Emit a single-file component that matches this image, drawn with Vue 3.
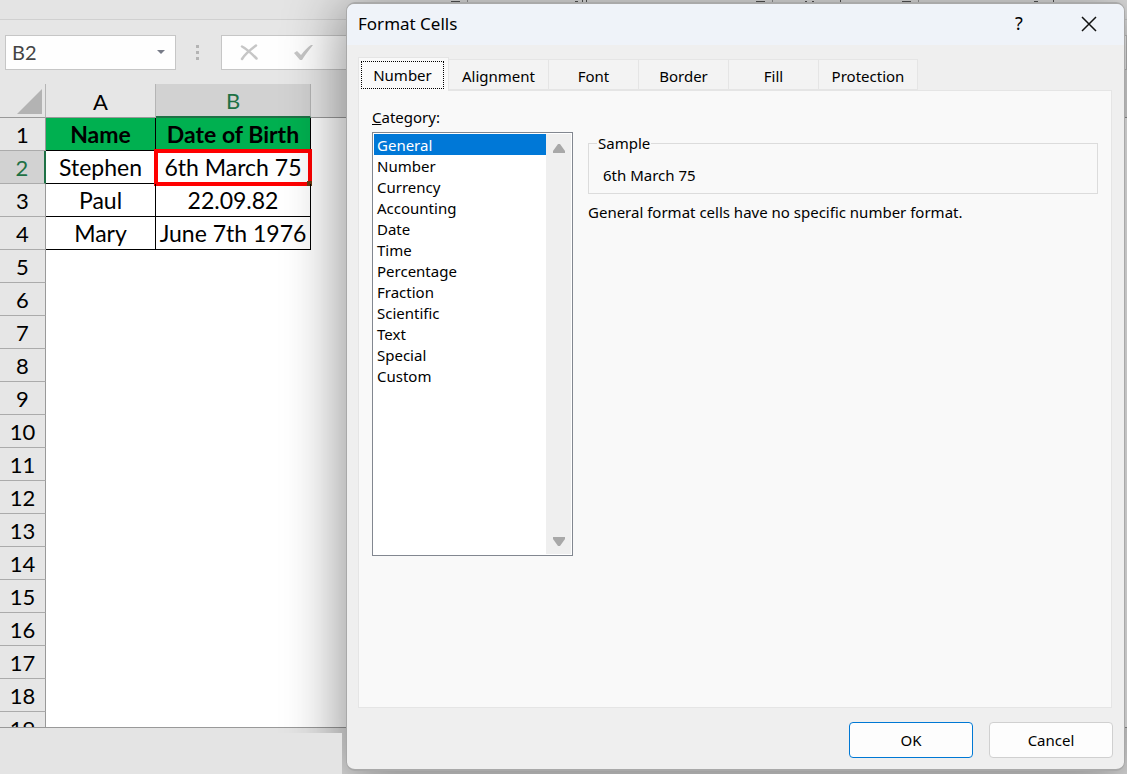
<script setup>
import { ref } from 'vue'

const categories = ['General', 'Number', 'Currency', 'Accounting', 'Date', 'Time', 'Percentage', 'Fraction', 'Scientific', 'Text', 'Special', 'Custom']
const category = ref('General')
const tabs = ['Number', 'Alignment', 'Font', 'Border', 'Fill', 'Protection']
const tab = ref('Number')
const cellName = ref('B2')
const formula = ref('')
const data = [
  ['Name', 'Date of Birth'],
  ['Stephen', '6th March 75'],
  ['Paul', '22.09.82'],
  ['Mary', 'June 7th 1976']
]
const rows = Array.from({ length: 19 }, (_, i) => data[i] || ['', ''])
</script>

<template>
  <div class="screen">
    <div class="workbook">
      <div class="ribbon">
        <svg class="groups" height="3" width="100%" aria-hidden="true">
          <path d="M451 1h9v1h-9zM575 1h3v1h-3zM582 0h1v2h-1zM586 0h1v2h-1zM756 1h9v1h-9zM805 1h2v1h-2zM812 1h2v1h-2zM840 0h1v2h-1zM902 1h9v1h-9zM1034 1h4v1h-4zM1053 0h1v2h-1z" fill="#555" />
          <path d="M467 0h1v3h-1zM772 0h1v3h-1zM918 0h1v3h-1z" fill="#999" />
        </svg>
      </div>
      <div class="formula-row">
        <div class="name-box">
          <input v-model="cellName" aria-label="Name box" />
          <button aria-label="Show names">
            <svg width="8" height="5" viewBox="0 0 8 5"><path d="M0 0h8L4 4z" fill="#777b87" /></svg>
          </button>
        </div>
        <svg class="grip" width="3" height="15" viewBox="0 0 3 15"><path d="M0 0h3v3H0zM0 6h3v3H0zM0 12h3v3H0z" fill="#b4b4b4" /></svg>
        <div class="formula-box">
          <button aria-label="Cancel entry">
            <svg width="18" height="17" viewBox="0 0 18 17"><path d="M2 2.500C7 5 12 10 16.500 14.500M16 1.500C10 6 5 10 2 15" fill="none" stroke="#c6c6c6" stroke-width="2.500" stroke-linecap="round" /></svg>
          </button>
          <button aria-label="Accept entry">
            <svg width="20" height="17" viewBox="0 0 20 17"><path d="M0 9l3-2 4 4C10 7 14 3 17 1h2C15 6 11 11 8 16H6z" fill="#c6c6c6" /></svg>
          </button>
          <input v-model="formula" aria-label="Formula" />
        </div>
      </div>
      <div class="grid">
        <table>
          <colgroup><col class="c-num" /><col class="c-a" /><col class="c-b" /><col /></colgroup>
          <thead>
            <tr>
              <th class="corner"><svg width="25" height="25" viewBox="0 0 25 25"><path d="M25 0v25H0z" fill="#b3b3b3" /></svg></th>
              <th>A</th>
              <th class="active">B</th>
              <th class="rest"></th>
            </tr>
          </thead>
          <tbody>
            <tr v-for="(r, i) in rows" :key="i" :class="{ head: i === 0, filled: i < 4, current: i === 1 }">
              <th scope="row">{{ i + 1 }}</th>
              <td>{{ r[0] }}</td>
              <td>{{ r[1] }}<span v-if="i === 1" class="selection"></span></td>
              <td class="rest"></td>
            </tr>
          </tbody>
        </table>
      </div>
      <div class="status"><div class="status-fill"></div></div>
    </div>

    <section class="dialog" role="dialog" aria-labelledby="dlg-title">
      <header class="title-bar">
        <h1 id="dlg-title">Format Cells</h1>
        <button class="help" aria-label="Help">?</button>
        <button class="close" aria-label="Close">
          <svg width="16" height="16" viewBox="0 0 16 16"><path d="M1 1l14 14M15 1L1 15" stroke="#111" stroke-width="1.500" fill="none" /></svg>
        </button>
      </header>
      <div class="body">
        <div class="tabs" role="tablist">
          <button v-for="t in tabs" :key="t" role="tab" :aria-selected="tab === t" :class="['tab', { on: tab === t, last: t === 'Protection' }]" @click="tab = t"><span>{{ t }}</span></button>
        </div>
        <div class="panel">
          <div class="left">
            <label for="category"><u>C</u>ategory:</label>
            <div class="list">
              <select id="category" v-model="category" size="12">
                <option v-for="c in categories" :key="c" :value="c">{{ c }}</option>
              </select>
              <div class="scroll" aria-hidden="true">
                <svg width="12" height="9" viewBox="0 0 12 9"><path d="M5 0h2l5 7v2H0V7z" fill="#a8a8a8" /></svg>
                <svg width="12" height="9" viewBox="0 0 12 9"><path d="M0 0h12v2L7 9H5L0 2z" fill="#a8a8a8" /></svg>
              </div>
            </div>
          </div>
          <div class="right">
            <fieldset>
              <legend>Sample</legend>
              <output>6th March 75</output>
            </fieldset>
            <p>General format cells have no specific number format.</p>
          </div>
        </div>
        <footer>
          <button class="btn primary">OK</button>
          <button class="btn">Cancel</button>
        </footer>
      </div>
    </section>
  </div>
</template>

<style>
body { margin: 0; }
</style>

<style scoped>
* { box-sizing: border-box; }
button, input, select { font: inherit; color: inherit; border: 0; padding: 0; margin: 0; background: none; }
svg { display: block; }
.screen { position: relative; height: 100vh; overflow: hidden; background: #e6e6e6; color: #000; font: 15px/21px "Noto Sans", sans-serif; }
.workbook { height: 100%; display: flex; flex-direction: column; }
.ribbon { height: 20px; flex: none; background: #e4e4e4; border-bottom: 1px solid #d0d0d0; }
.formula-row { flex: none; display: flex; align-items: center; height: 64px; padding: 0 0 0 5px; }
.name-box { width: 171px; height: 35px; display: flex; align-items: center; background: #fefefe; border: 1px solid #c6c6c6; padding: 0 10px 0 6px; color: #444; font: 20px/28px Lato, sans-serif; }
.name-box input { flex: 1; min-width: 0; }
.grip { margin: 0 22px 0 20px; }
.formula-box { flex: 1; height: 35px; display: flex; align-items: center; gap: 36px; background: #fefefe; border: 1px solid #c6c6c6; padding-left: 18px; }
.formula-box input { flex: 1; min-width: 0; }
.grid { flex: 1; min-height: 0; overflow: hidden; background: #fff; font: 22px/30px Lato, sans-serif; }
table { width: 100%; table-layout: fixed; border-collapse: separate; border-spacing: 0; }
.c-num { width: 46px; }
.c-a { width: 110px; }
.c-b { width: 155px; }
th, td { height: 33px; padding: 2px 0 0; text-align: center; vertical-align: middle; font-weight: 400; white-space: nowrap; position: relative; }
td { padding: 0; font-size: 23px; }
thead th { height: 34px; background: #e6e6e6; border-bottom: 1px solid #999; border-right: 1px solid #b5b5b5; }
thead th.active { background: #d2d2d2; color: #1e7145; border-bottom: 2px solid #1e7145; }
thead th.rest { border-right: 0; }
.corner svg { margin: 0 3px 0 auto; }
tbody th { background: #e6e6e6; border-right: 1px solid #999; border-bottom: 1px solid #ababab; }
.current th { background: #d2d2d2; color: #1e7145; border-right: 2px solid #1e7145; }
.filled td:not(.rest) { border-right: 1px solid #000; border-bottom: 1px solid #000; }
.head td:not(.rest) { background: #00b050; font-weight: 700; }
.selection { position: absolute; inset: -2px -2px -3px -2px; border: 4px solid #f00; }
.selection::after { content: ""; position: absolute; right: -4px; bottom: -4px; width: 5px; height: 5px; background: #6b3a10; }
.status { flex: none; height: 47px; border-top: 1px solid #999; background: #e4e4e4; padding: 5px 0 0 1px; }
.status-fill { position: relative; z-index: 2; width: 341px; height: 100%; background: #e4e4e4; }

.dialog { position: absolute; inset: 2px 2px 3px 346px; display: flex; flex-direction: column; background: #efefef; border: 2px solid #a9a9a9; border-left-width: 1px; border-right-width: 1px; border-radius: 9px; box-shadow: 0 8px 56px 6px rgba(0, 0, 0, 0.42); }
.title-bar { flex: none; display: flex; align-items: center; height: 41px; padding: 0 27px 2px 11px; background: #eff3f9; border-radius: 7px 7px 0 0; }
h1 { flex: 1; margin: 0; font-size: 17px; line-height: 24px; font-weight: 400; }
.help { width: 20px; margin-right: 52px; font-size: 18px; }
.body { flex: 1; min-height: 0; display: flex; flex-direction: column; padding: 12px 12px 11px 11px; }
.tabs { display: flex; align-items: flex-end; height: 33px; flex: none; }
.tab { width: 90px; height: 31px; padding-top: 3px; background: #f3f3f3; border: 1px solid #e5e5e5; border-left: 0; }
.tab:nth-child(2) { width: 100px; }
.tab.last { width: 99px; }
.tab.on { width: 91px; height: 34px; margin-bottom: -1px; padding: 3px 4px 1px 2px; background: #f9f9f9; border-left: 1px solid #e5e5e5; border-bottom: 0; position: relative; display: flex; }
.tab.on span { flex: 1; height: 28px; line-height: 27px; border: 1px dotted #000; }
.panel { flex: 1; min-height: 0; display: flex; gap: 15px; background: #f9f9f9; border: 1px solid #e5e5e5; padding: 16px 13px 0; }
.left { width: 201px; flex: none; display: flex; flex-direction: column; }
.list { display: flex; height: 424px; margin-top: 4px; padding: 1px; background: #fff; border: 1px solid #828790; }
select { flex: 1; min-width: 0; height: 100%; overflow: hidden; outline: none; border-radius: 0; }
option { height: 21px; min-height: 21px; line-height: 21px; padding: 1px 0 0 3px; }
option:checked { background: #0078d7 linear-gradient(#0078d7, #0078d7); color: #fff; -webkit-text-fill-color: #fff; }
.scroll { width: 25px; background: #efefef; display: flex; flex-direction: column; justify-content: space-between; align-items: center; padding: 10px 0 8px; }
.right { flex: 1; min-width: 0; padding-top: 26px; }
fieldset { margin: 0; height: 61px; border: 1px solid #dcdcdc; padding: 11px 14px 0; }
legend { padding: 0 1px; margin-left: -6px; }
output { display: block; }
p { margin: 8px 0 0; }
footer { flex: none; display: flex; justify-content: flex-end; gap: 16px; padding-top: 14px; margin-right: -1px; }
.btn { width: 124px; height: 36px; background: #fdfdfd; border: 1px solid #d0d0d0; border-radius: 4px; }
.btn.primary { border-color: #0078d4; }
</style>
